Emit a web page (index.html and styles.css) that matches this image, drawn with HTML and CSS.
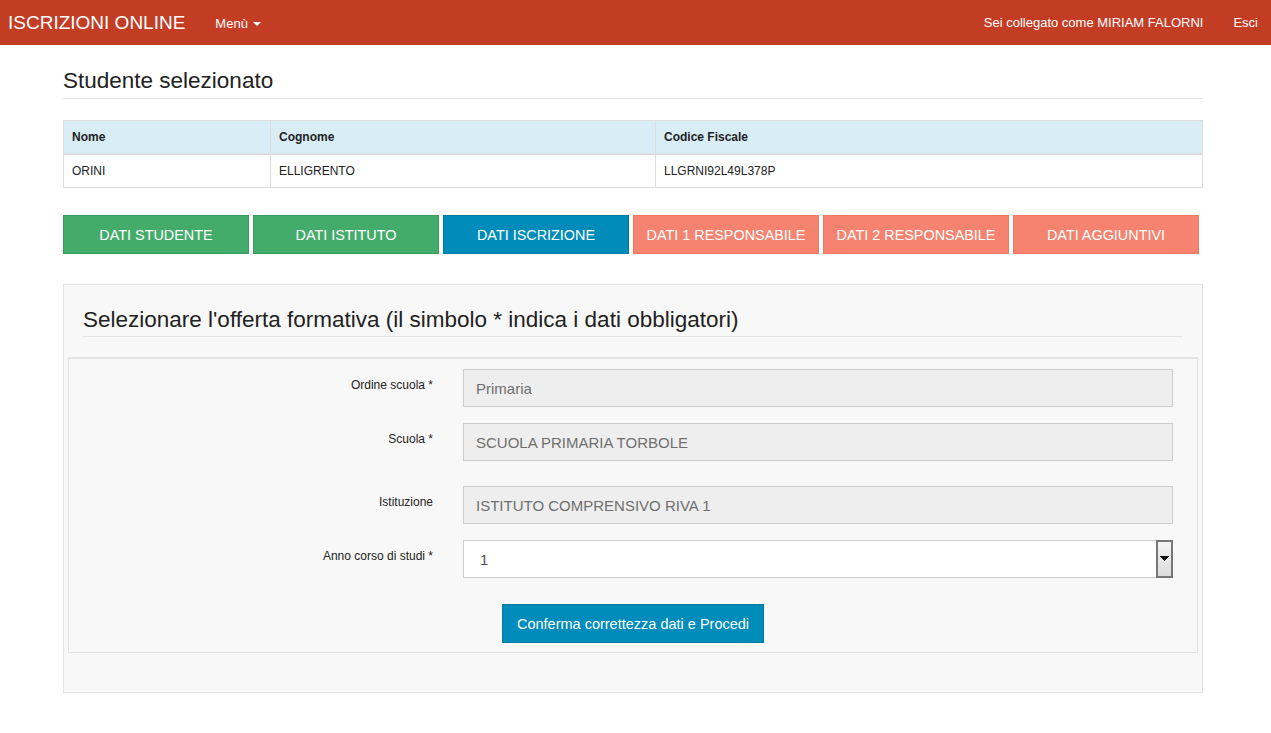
FILE: index.html
```html
<!DOCTYPE html>
<html lang="it">
<head>
<meta charset="utf-8">
<title>Iscrizioni online</title>
<link rel="stylesheet" href="styles.css">
</head>
<body>
<nav class="navbar">
  <div class="nav-left">
    <span class="brand">ISCRIZIONI ONLINE</span>
    <span class="menu">Menù <span class="caret"></span></span>
  </div>
  <div class="nav-right">
    <span class="user">Sei collegato come MIRIAM FALORNI</span>
    <span class="logout">Esci</span>
  </div>
</nav>

<main class="container">
  <h2 class="page-title">Studente selezionato</h2>

  <table class="student-table">
    <thead>
      <tr><th class="c1">Nome</th><th class="c2">Cognome</th><th>Codice Fiscale</th></tr>
    </thead>
    <tbody>
      <tr><td>ORINI</td><td>ELLIGRENTO</td><td>LLGRNI92L49L378P</td></tr>
    </tbody>
  </table>

  <div class="steps">
    <span class="step step-done">DATI STUDENTE</span>
    <span class="step step-done">DATI ISTITUTO</span>
    <span class="step step-active">DATI ISCRIZIONE</span>
    <span class="step step-todo">DATI 1 RESPONSABILE</span>
    <span class="step step-todo">DATI 2 RESPONSABILE</span>
    <span class="step step-todo">DATI AGGIUNTIVI</span>
  </div>

  <section class="well">
    <h3 class="well-title">Selezionare l'offerta formativa (il simbolo * indica i dati obbligatori)</h3>
    <div class="form-box">
      <div class="form-row">
        <label class="form-label">Ordine scuola *</label>
        <div class="form-input disabled">Primaria</div>
      </div>
      <div class="form-row">
        <label class="form-label">Scuola *</label>
        <div class="form-input disabled">SCUOLA PRIMARIA TORBOLE</div>
      </div>
      <div class="form-row row-gap">
        <label class="form-label">Istituzione</label>
        <div class="form-input disabled">ISTITUTO COMPRENSIVO RIVA 1</div>
      </div>
      <div class="form-row">
        <label class="form-label">Anno corso di studi *</label>
        <div class="form-input select">
          <span class="select-value">1</span>
          <span class="select-arrow">
            <svg width="9" height="6" viewBox="0 0 9 6"><path d="M0 0h9v1h-1v1h-1v1h-1v1h-1v1h-1v-1h-1v-1h-1v-1h-1v-1h-1z" fill="#111"/></svg>
          </span>
        </div>
      </div>
      <div class="actions">
        <button class="btn-primary">Conferma correttezza dati e Procedi</button>
      </div>
    </div>
  </section>
</main>
</body>
</html>
```

FILE: styles.css
```css
* { box-sizing: border-box; }
html, body { margin: 0; padding: 0; }
body {
  font-family: "Liberation Sans", Arial, sans-serif;
  color: #222;
  background: #fff;
  font-size: 12px;
}

.navbar {
  height: 45px;
  background: #c33c24;
  display: flex;
  align-items: center;
  justify-content: space-between;
  color: #fff;
  padding: 0 13px 0 8px;
}
.nav-left, .nav-right { display: flex; align-items: center; }
.brand { font-size: 19px; line-height: 20px; margin-top: 1px; }
.menu { font-size: 13px; margin-left: 30px; display: flex; align-items: center; margin-top: 1px; }
.caret {
  display: inline-block;
  width: 0; height: 0;
  border-left: 4px solid transparent;
  border-right: 4px solid transparent;
  border-top: 4px solid #fff;
  margin-left: 5px;
  margin-top: 2px;
}
.nav-right { font-size: 13px; }
.logout { margin-left: 30px; }

.container {
  width: 1140px;
  margin-left: 63px;
  padding-top: 1px;
}

.page-title {
  font-size: 22.5px;
  font-weight: normal;
  color: #222;
  margin: 22px 0 0;
  padding-bottom: 4px;
  border-bottom: 1px solid #e4e4e4;
  line-height: 26px;
}

.student-table {
  width: 100%;
  border-collapse: collapse;
  margin-top: 21px;
  font-size: 12px;
}
.student-table th, .student-table td {
  border: 1px solid #ddd;
  text-align: left;
  padding: 0 8px;
  height: 34px;
}
.student-table thead th {
  background: #d9edf7;
  font-weight: bold;
  color: #222;
  border-bottom-width: 2px;
  height: 33px;
}
.student-table .c1 { width: 207px; }
.student-table .c2 { width: 385px; }

.steps {
  display: flex;
  gap: 4px;
  margin-top: 27px;
}
.step {
  width: 186px;
  height: 39px;
  display: flex;
  align-items: center;
  justify-content: center;
  font-size: 14.4px;
  color: #fff;
  border: 1px solid transparent;
}
.step-done { background: #43ac6a; border-color: #3c9a5f; }
.step-active { background: #008cba; border-color: #0079a1; }
.step-todo { background: #f58370; border-color: #f17863; }

.well {
  margin-top: 30px;
  background: #f8f8f8;
  border: 1px solid #e3e3e3;
  padding: 22px 4px 39px;
  height: 409px;
}
.well-title {
  font-size: 22.5px;
  font-weight: normal;
  color: #222;
  margin: 0 15px;
  padding-bottom: 3px;
  border-bottom: 1px solid #e4e4e4;
  line-height: 26px;
}
.form-box {
  margin-top: 20px;
  border: 1px solid #e3e3e3;
  border-top-width: 2px;
  padding: 10px 24px 9px 0;
  height: 296px;
}
.form-row {
  display: flex;
  align-items: flex-start;
  margin-bottom: 16px;
}
.form-row.row-gap { margin-top: 25px; }
.form-label {
  width: 364px;
  text-align: right;
  font-size: 12px;
  color: #222;
  padding-top: 9px;
  flex: none;
}
.form-input {
  margin-left: 30px;
  width: 710px;
  height: 38px;
  border: 1px solid #ccc;
  display: flex;
  align-items: center;
  font-size: 15px;
  color: #6f6f6f;
  padding-left: 12px;
}
.form-input.disabled { background: #eee; }
.form-input.select {
  background: #fff;
  justify-content: space-between;
  padding-left: 16px;
  padding-right: 0;
  color: #555;
  border-color: #ccc;
}
.select-arrow {
  width: 17px;
  height: 38px;
  margin: -1px -1px -1px 0;
  border: 2px solid #777;
  background: linear-gradient(#f4f4f4, #dcdcdc);
  display: flex;
  align-items: center;
  justify-content: center;
}
.actions {
  display: flex;
  justify-content: center;
  margin-top: 9px;
  padding-top: 10px;
}
.btn-primary {
  margin-left: 24px;
  background: #008cba;
  border: 1px solid #0079a1;
  color: #fff;
  font-family: "Liberation Sans", Arial, sans-serif;
  font-size: 14.5px;
  height: 39px;
  padding: 0;
  width: 262px;
  white-space: nowrap;
  cursor: pointer;
}
```
